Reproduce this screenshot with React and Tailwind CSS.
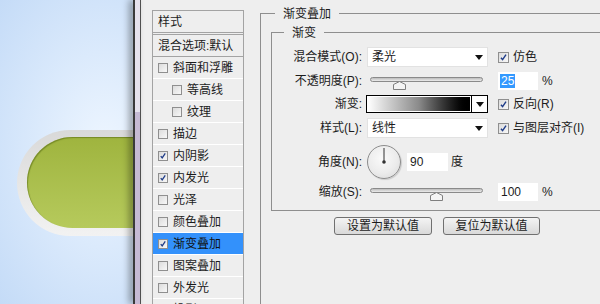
import React from "react";

const FONT = "font-['Liberation_Sans','Noto_Sans_CJK_SC',sans-serif]";

function Check({ checked, size = "w-[11px] h-[11px]" }) {
  return (
    <span className={`${size} shrink-0 border border-[#8f8f8f] bg-gradient-to-br from-[#dcdcdc] to-[#f8f8f8] flex items-center justify-center`}>
      {checked && (
        <svg viewBox="0 0 10 10" className="w-full h-full">
          <path d="M2.2 5.2 L4 7.4 L7.8 1.8" fill="none" stroke="#1f3c88" strokeWidth="1.6" />
        </svg>
      )}
    </span>
  );
}

function Arrow() {
  return (
    <svg viewBox="0 0 8 5" className="w-[8px] h-[5px]">
      <path d="M0 0 H8 L4 5 Z" fill="#111" />
    </svg>
  );
}

function Slider({ thumb }) {
  return (
    <div className="relative w-[113px] h-[18px] ml-[3px]">
      <div className="absolute left-0 right-0 top-[5px] h-[5px] rounded-full border border-[#8a8a8a] bg-gradient-to-b from-[#bdbdbd] to-[#ececec]" />
      <svg viewBox="0 0 13 9" className="absolute top-[9px] w-[13px] h-[9px]" style={{ left: thumb }}>
        <path d="M0.5 3.5 L6.5 0.5 L12.5 3.5 V8.5 H0.5 Z" fill="#f4f4f4" stroke="#7f7f7f" />
      </svg>
    </div>
  );
}

function Select({ value }) {
  return (
    <div className="w-[121px] h-[20px] bg-white border border-[#e2e2e2] flex items-center justify-between pl-[4px] pr-[4px]">
      <span>{value}</span>
      <Arrow />
    </div>
  );
}

function Field({ value, selected, w = "w-[40px]" }) {
  return (
    <div className={`${w} h-[18px] bg-white flex items-center pl-[2px]`}>
      {selected ? <span className="bg-[#3399ff] text-white px-[1px] leading-[14px]">{value}</span> : <span className="pl-[1px]">{value}</span>}
    </div>
  );
}

const layers = [
  { name: "斜面和浮雕" },
  { name: "等高线", sub: true },
  { name: "纹理", sub: true },
  { name: "描边" },
  { name: "内阴影", on: true },
  { name: "内发光", on: true },
  { name: "光泽" },
  { name: "颜色叠加" },
  { name: "渐变叠加", on: true, active: true },
  { name: "图案叠加" },
  { name: "外发光" },
  { name: "投影" },
];

function Row({ label, h, mt, children }) {
  return (
    <div className={`flex items-center ${h} ${mt}`}>
      <div className="w-[91px] text-right pr-[1px]">{label}</div>
      <div className="ml-[4px] w-[122px] flex items-center">{children[0]}</div>
      <div className="ml-[9px] flex items-center gap-[4px]">{children[1]}</div>
    </div>
  );
}

export default function App() {
  return (
    <div className={`w-[600px] h-[304px] flex overflow-hidden text-[12px] text-[#1c1c1c] ${FONT}`}>
      <div className="w-[133px] shrink-0 bg-[radial-gradient(ellipse_at_105px_150px,#eef6ff_0%,#dbeafc_45%,#c4dbf7_100%)] pt-[130px] pl-[17px]">
        <div className="h-[106px] rounded-l-[53px] bg-gradient-to-b from-[#d9d9d9] via-[#e6e6e6] to-[#f2f2f2] pl-[10px] pt-[7px] pb-[8px]">
          <div className="h-full rounded-l-[46px] bg-gradient-to-b from-[#9fb43e] to-[#b6ca5c] shadow-[inset_1px_1px_1px_rgba(90,110,20,0.6)]" />
        </div>
      </div>
      <div className="relative z-10 w-[8px] shrink-0 border-l-2 border-r border-l-[#3a3a3a] border-r-[#4f4f4f] flex flex-col shadow-[-4px_0_7px_rgba(0,0,0,0.35)]">
        <div className="h-[112px] bg-[#e6e2ed]" />
        <div className="flex-1 bg-[#c6bad4]" />
      </div>
      <div className="flex-1 bg-[#eeeeee] flex items-start pt-[10px] pl-[11px]">
        <div className="w-[92px] shrink-0 border border-[#a3a3a3]">
          <div className="h-[22px] pl-[5px] flex items-center border-b border-[#a3a3a3]">样式</div>
          <div className="h-[23px] mt-[1px] pl-[5px] flex items-center border-t border-b border-[#a3a3a3]">混合选项:默认</div>
          {layers.map((l) => (
            <div key={l.name} className={`h-[22px] flex items-center border-b border-white ${l.sub ? "pl-[19px]" : "pl-[5px]"} ${l.active ? "bg-[#3391fb]" : ""}`}>
              <Check checked={l.on} size="w-[10px] h-[10px]" />
              <span className={`ml-[5px] ${l.active ? "text-[#111]" : ""}`}>{l.name}</span>
            </div>
          ))}
        </div>
        <div className="relative ml-[16px] mt-[3px] flex-1 h-[320px] border-l border-t border-[#8e8e8e]">
          <span className="absolute -top-[9px] left-[14px] px-[8px] bg-[#eeeeee]">渐变叠加</span>
          <div className="relative ml-[10px] mt-[18px] h-[179px] border-l border-t border-b border-[#8e8e8e]">
            <span className="absolute -top-[9px] left-[12px] px-[8px] bg-[#eeeeee]">渐变</span>
            <Row label="混合模式(O):" h="h-[20px]" mt="mt-[14px]">
              <Select value="柔光" />
              <>
                <Check checked />
                <span>仿色</span>
              </>
            </Row>
            <Row label="不透明度(P):" h="h-[18px]" mt="mt-[5px]">
              <Slider thumb={23} />
              <>
                <Field value="25" selected />
                <span>%</span>
              </>
            </Row>
            <Row label="渐变:" h="h-[18px]" mt="mt-[5px]">
              <div className="flex h-[18px]">
                <div className="w-[106px] -ml-[1px] border border-black p-[1px] bg-white">
                  <div className="h-full bg-gradient-to-r from-white via-[#8a8a8a] to-black" />
                </div>
                <div className="w-[16px] border border-l-0 border-black bg-white flex items-center justify-center">
                  <Arrow />
                </div>
              </div>
              <>
                <Check checked />
                <span>反向(R)</span>
              </>
            </Row>
            <Row label="样式(L):" h="h-[20px]" mt="mt-[5px]">
              <Select value="线性" />
              <>
                <Check checked />
                <span>与图层对齐(I)</span>
              </>
            </Row>
            <Row label="角度(N):" h="h-[34px]" mt="mt-[7px]">
              <div className="flex items-center">
                <div className="relative w-[34px] h-[34px] rounded-full border border-[#8c8c8c] bg-[radial-gradient(circle_at_45%_40%,#fafafa_0%,#ececec_55%,#d6d6d6_100%)] shadow-[1px_1px_1px_rgba(0,0,0,0.15)]">
                  <svg viewBox="0 0 34 34" className="absolute -left-[1px] -top-[1px] w-[34px] h-[34px]">
                    <line x1="17" y1="17" x2="17" y2="3" stroke="#333" strokeWidth="1" />
                    <circle cx="17" cy="17" r="1.8" fill="#333" />
                  </svg>
                </div>
                <div className="ml-[6px]">
                  <Field value="90" w="w-[41px]" />
                </div>
                <span className="ml-[3px]">度</span>
              </div>
              <></>
            </Row>
            <Row label="缩放(S):" h="h-[18px]" mt="mt-[4px]">
              <Slider thumb={60} />
              <>
                <Field value="100" />
                <span>%</span>
              </>
            </Row>
          </div>
          <div className="flex gap-[11px] ml-[73px] mt-[6px]">
            <button className="w-[98px] h-[18px] rounded-[3px] border border-[#707070] bg-gradient-to-b from-[#f4f4f4] to-[#d9d9d9] leading-none">设置为默认值</button>
            <button className="w-[97px] h-[18px] rounded-[3px] border border-[#707070] bg-gradient-to-b from-[#f4f4f4] to-[#d9d9d9] leading-none">复位为默认值</button>
          </div>
        </div>
      </div>
    </div>
  );
}
